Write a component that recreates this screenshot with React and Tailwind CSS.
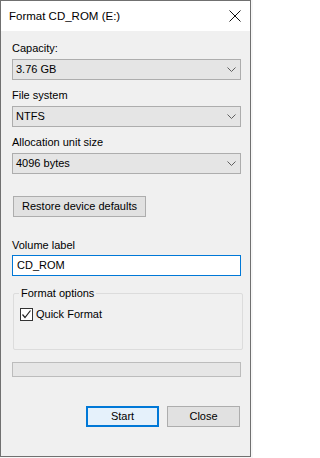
import React from "react";

const font = { fontFamily: '"Liberation Sans", Arial, sans-serif' };

const Chevron = () => (
  <svg width="9" height="5" viewBox="0 0 9 5" className="shrink-0">
    <path d="M0.5 0.5 L4.5 4.5 L8.5 0.5" fill="none" stroke="#5f5f5f" strokeWidth="1" />
  </svg>
);

const Combo = ({ value }) => (
  <div className="flex items-center justify-between h-[21px] w-[229px] border border-[#adadad] bg-[#e5e5e5] pl-[3px] pr-[4px] text-[11px] leading-[13px] text-black">
    <span>{value}</span>
    <Chevron />
  </div>
);

const Label = ({ children, className = "" }) => (
  <div className={"text-[11px] leading-[13px] text-black " + className}>{children}</div>
);

const FormatDialog = () => {
  return (
    <div className="w-[253px] h-[458px] bg-[#f7f7f7]" style={font}>
      <div className="w-[251px] h-[457px] border border-[#707070] bg-[#f0f0f0] flex flex-col">
        {/* title bar */}
        <div className="h-[30px] bg-white flex items-center justify-between pl-[8px] pr-[8px] shrink-0">
          <span className="text-[11.5px] leading-[13px] text-black">Format CD_ROM (E:)</span>
          <svg width="12" height="12" viewBox="0 0 12 12" className="mr-[1px]">
            <path d="M0.5 0.5 L11.5 11.5 M11.5 0.5 L0.5 11.5" stroke="#111" strokeWidth="1" />
          </svg>
        </div>

        <div className="flex flex-col pl-[11px]">
          <Label className="mt-[11px]">Capacity:</Label>
          <div className="mt-[4px]">
            <Combo value="3.76 GB" />
          </div>
          <Label className="mt-[9px]">File system</Label>
          <div className="mt-[4px]">
            <Combo value="NTFS" />
          </div>
          <Label className="mt-[9px]">Allocation unit size</Label>
          <div className="mt-[4px]">
            <Combo value="4096 bytes" />
          </div>

          <button className="mt-[22px] ml-[1px] h-[21px] w-[133px] border border-[#adadad] bg-[#e1e1e1] text-[11px] leading-[13px] text-black text-center">
            Restore device defaults
          </button>

          <Label className="mt-[22px]">Volume label</Label>
          <div className="mt-[3px] h-[21px] w-[229px] border border-[#0078d7] bg-white flex items-center pl-[4px] text-[11px] leading-[13px] text-black">
            CD_ROM
          </div>

          {/* group box */}
          <div className="relative mt-[17px] ml-[1px] h-[57px] w-[230px] border border-[#dcdcdc] rounded-[2px]">
            <span className="absolute -top-[7px] left-[5px] px-[2px] bg-[#f0f0f0] text-[11px] leading-[13px] text-black">
              Format options
            </span>
            <div className="flex items-center mt-[14px] ml-[6px] gap-[3px]">
              <div className="w-[13px] h-[13px] border border-[#333] bg-white flex items-center justify-center">
                <svg width="11" height="11" viewBox="0 0 11 11">
                  <path d="M1.5 5.5 L4 8.5 L9.5 1.5" fill="none" stroke="#222" strokeWidth="1.2" />
                </svg>
              </div>
              <span className="text-[11px] leading-[13px] text-black">Quick Format</span>
            </div>
          </div>

          {/* progress bar */}
          <div className="mt-[12px] h-[15px] w-[229px] border border-[#bcbcbc] bg-[#e6e6e6]" />

          <div className="flex gap-[8px] mt-[29px] ml-[74px]">
            <button className="h-[21px] w-[73px] border-2 border-[#0078d7] bg-[#e5f1fb] text-[11px] leading-[13px] text-black">
              Start
            </button>
            <button className="h-[21px] w-[73px] border border-[#adadad] bg-[#e1e1e1] text-[11px] leading-[13px] text-black">
              Close
            </button>
          </div>
        </div>
      </div>
    </div>
  );
};

export default function App() {
  return <FormatDialog />;
}
